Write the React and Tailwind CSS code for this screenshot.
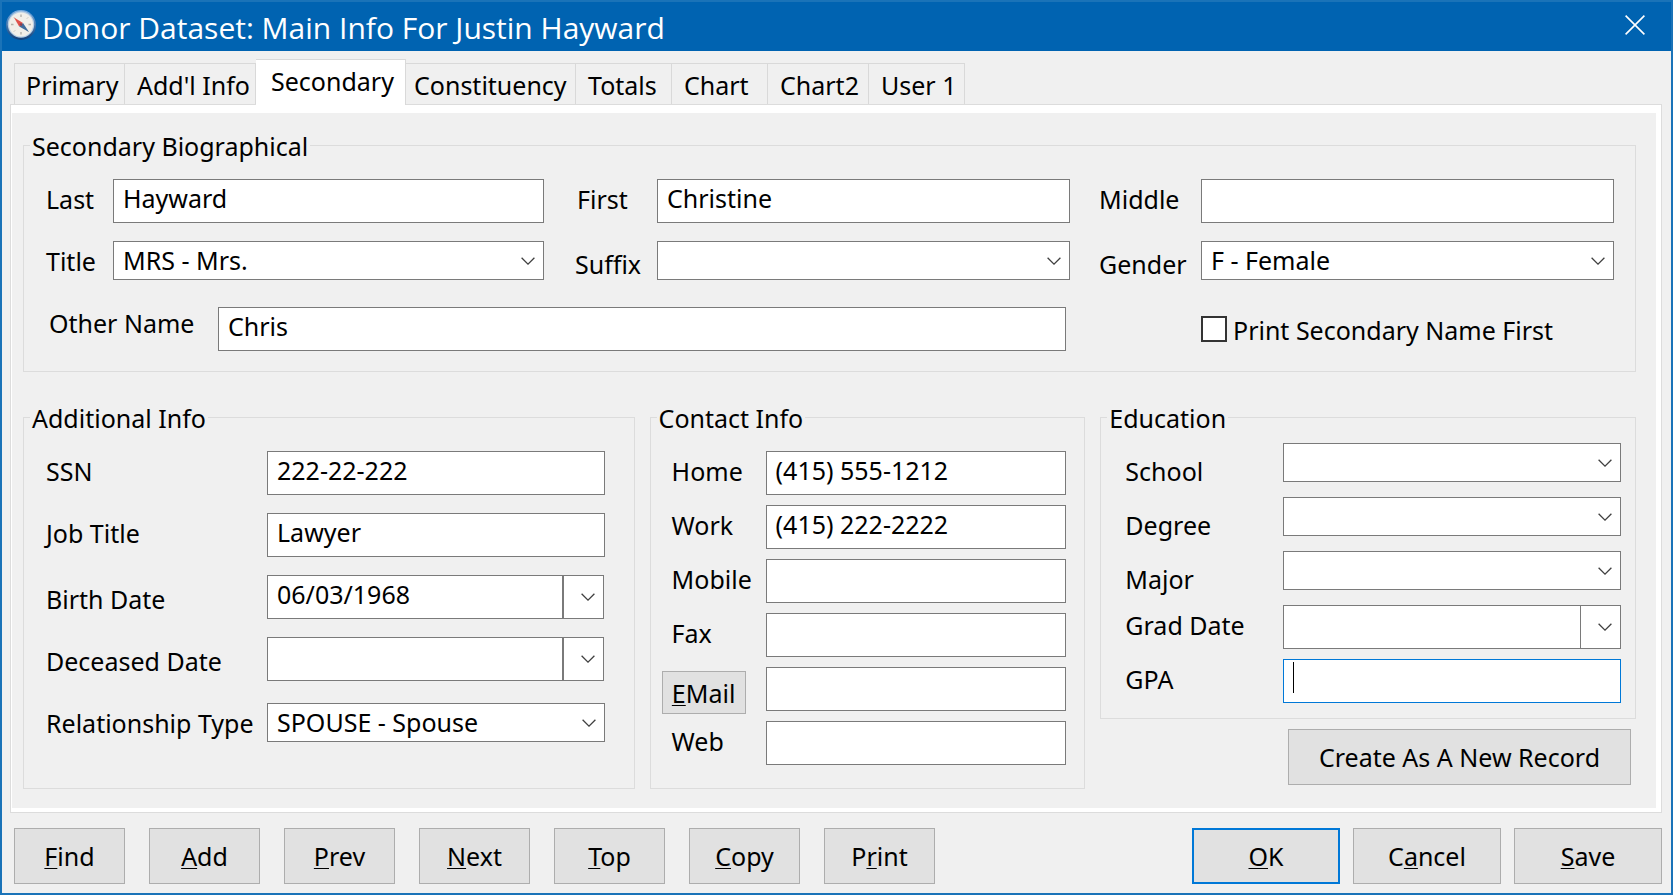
import { useState } from 'react';
import clsx from 'clsx';

const TABS = [
  { label: 'Primary',      size: 'w-[111px] pl-[11px] border-l' },
  { label: "Add'l Info",   size: 'w-[131px] pl-3' },
  { label: 'Secondary',    size: 'w-[150px] pl-[15px]' },
  { label: 'Constituency', size: 'w-[170px] pl-2' },
  { label: 'Totals',       size: 'w-24 pl-3' },
  { label: 'Chart',        size: 'w-24 pl-3' },
  { label: 'Chart2',       size: 'w-[101px] pl-3' },
  { label: 'User 1',       size: 'w-24 pl-3' },
];

// `key` is the index of the underlined accelerator letter
const RECORD_ACTIONS = [
  { label: 'Find',  key: 0 },
  { label: 'Add',   key: 0 },
  { label: 'Prev',  key: 0 },
  { label: 'Next',  key: 0 },
  { label: 'Top',   key: 0 },
  { label: 'Copy',  key: 0 },
  { label: 'Print', key: 1 },
];

const DIALOG_ACTIONS = [
  { label: 'OK',     key: 0, primary: true },
  { label: 'Cancel', key: 1 },
  { label: 'Save',   key: 0 },
];

const PHONES = [
  { id: 'home',   label: 'Home',   value: '(415) 555-1212' },
  { id: 'work',   label: 'Work',   value: '(415) 222-2222' },
  { id: 'mobile', label: 'Mobile', value: '' },
  { id: 'fax',    label: 'Fax',    value: '' },
];

function CompassIcon() {
  return (
    <svg viewBox="0 0 32 32" className="w-8 h-8 shrink-0" aria-hidden="true">
      <defs>
        <linearGradient id="rim" x1="0" y1="0" x2="0" y2="1">
          <stop offset="0" stopColor="#7db0e2" />
          <stop offset="1" stopColor="#123f78" />
        </linearGradient>
      </defs>
      <circle cx="17" cy="16" r="15" fill="url(#rim)" />
      <circle cx="17" cy="15.5" r="13.2" fill="#b9cfe4" />
      <circle cx="17" cy="15.5" r="12" fill="#f1efe9" />
      <g stroke="#b4b2aa" strokeWidth="1.4">
        <path d="M17 5.5v2.5M17 23v2.5M7 15.5h2.5M24.5 15.5H27" />
        <path d="M10 8.5l1 1M24 8.5l-1 1M10 22.5l1-1M24 22.5l-1-1" strokeWidth="1" />
      </g>
      <path d="M10 8.5l9 5.4-3.8 3.6z" fill="#e0524b" />
      <path d="M25 23l-9.8-5.5 3.8-3.6z" fill="#3f6c9c" />
      <circle cx="17" cy="15.6" r="1.3" fill="#8f3f4c" />
    </svg>
  );
}

function Chevron() {
  return (
    <svg viewBox="0 0 14 8" className="w-[14px] h-2" fill="none" stroke="#404040" strokeWidth="1.3" aria-hidden="true">
      <path d="M.6.7L7 7.1 13.4.7" />
    </svg>
  );
}

function Accel({ label, index }) {
  return (
    <>
      {label.slice(0, index)}
      <u className="decoration-1 underline-offset-2">{label[index]}</u>
      {label.slice(index + 1)}
    </>
  );
}

function Group({ title, children }) {
  return (
    <fieldset className="min-w-0 border border-[#dcdcdc]">
      <legend className="ml-[6px] px-[2px] h-8 leading-[34px]">{title}</legend>
      {children}
    </fieldset>
  );
}

function Label({ htmlFor, className = 'pt-1', children }) {
  return (
    <label htmlFor={htmlFor} className={clsx('self-start leading-8 whitespace-nowrap', className)}>
      {children}
    </label>
  );
}

function TextBox({ id, value = '', className, ...rest }) {
  return (
    <input
      id={id}
      type="text"
      defaultValue={value}
      className={clsx('w-full min-w-0 h-11 border border-[#7a7a7a] bg-white px-[9px] pb-[6px] outline-none', className)}
      {...rest}
    />
  );
}

function Select({ id, value = '', className }) {
  return (
    <div className={clsx('relative min-w-0', className)}>
      <select
        id={id}
        defaultValue={value}
        className="block w-full h-[39px] appearance-none border border-[#7a7a7a] bg-white pl-[9px] pr-9 pb-px leading-8 outline-none"
      >
        <option value={value}>{value}</option>
      </select>
      <span className="absolute right-[9px] top-4 pointer-events-none"><Chevron /></span>
    </div>
  );
}

function DateBox({ id, name, value = '', double }) {
  return (
    <div className={clsx('flex h-11 min-w-0', double && 'mr-px')}>
      <TextBox id={id} value={value} className={clsx('flex-1', !double && 'border-r-0')} />
      <button
        type="button"
        aria-label={`Pick ${name}`}
        className="w-[41px] shrink-0 border border-[#7a7a7a] bg-white flex items-center justify-end pr-2"
      >
        <Chevron />
      </button>
    </div>
  );
}

function PushButton({ primary, className, children }) {
  return (
    <button
      type="button"
      className={clsx(
        'bg-[#e1e1e1] text-center pt-[2px]',
        primary ? 'border-2 border-[#0078d7]' : 'border border-[#adadad]',
        className,
      )}
    >
      {children}
    </button>
  );
}

function SecondaryBio() {
  return (
    <Group title="Secondary Biographical">
      <div className="grid grid-cols-[67px_431fr_113px_413fr_131px_413fr] pl-[22px] pr-[21px] pt-[18px] pb-5">
        <Label htmlFor="last">Last</Label>
        <TextBox id="last" value="Hayward" />
        <Label htmlFor="first" className="pl-[33px] pt-1">First</Label>
        <TextBox id="first" value="Christine" />
        <Label htmlFor="middle" className="pl-[29px] pt-1">Middle</Label>
        <TextBox id="middle" />

        <Label htmlFor="title" className="pt-[22px]">Title</Label>
        <Select id="title" value="MRS - Mrs." className="mt-[18px]" />
        <Label htmlFor="suffix" className="pl-[31px] pt-[25px]">Suffix</Label>
        <Select id="suffix" className="mt-[18px]" />
        <Label htmlFor="gender" className="pl-[29px] pt-[25px]">Gender</Label>
        <Select id="gender" value="F - Female" className="mt-[18px]" />

        <div className="col-span-4 mt-[27px] mr-1 pl-[3px] flex">
          <Label htmlFor="other" className="w-[169px] shrink-0">Other Name</Label>
          <TextBox id="other" value="Chris" className="flex-1" />
        </div>
        <div className="col-start-6 mt-[27px] flex items-center gap-[6px]">
          <input
            id="print-first"
            type="checkbox"
            className="appearance-none w-[26px] h-[26px] shrink-0 border-2 border-[#333] bg-white checked:bg-[#333]"
          />
          <Label htmlFor="print-first" className="pt-[7px]">Print Secondary Name First</Label>
        </div>
      </div>
    </Group>
  );
}

function AdditionalInfo() {
  return (
    <Group title="Additional Info">
      <div className="grid grid-cols-[221px_1fr] auto-rows-[44px] gap-y-[18px] pl-[22px] pr-[29px] pt-[18px] pb-[45px]">
        <Label htmlFor="ssn">SSN</Label>
        <TextBox id="ssn" value="222-22-222" />
        <Label htmlFor="job">Job Title</Label>
        <TextBox id="job" value="Lawyer" />
        <Label htmlFor="birth" className="pt-2">Birth Date</Label>
        <DateBox id="birth" name="birth date" value="06/03/1968" double />
        <Label htmlFor="deceased" className="pt-2">Deceased Date</Label>
        <DateBox id="deceased" name="deceased date" double />
        <Label htmlFor="relationship" className="pt-2">Relationship Type</Label>
        <Select id="relationship" value="SPOUSE - Spouse" className="mt-1" />
      </div>
    </Group>
  );
}

function ContactInfo() {
  return (
    <Group title="Contact Info">
      <div className="grid grid-cols-[104px_1fr] auto-rows-[44px] gap-y-[10px] pl-[11px] pr-[18px] pt-[18px]">
        {PHONES.map(p => (
          <div key={p.id} className="contents">
            <Label htmlFor={p.id} className="pl-[10px] pt-1">{p.label}</Label>
            <TextBox id={p.id} value={p.value} />
          </div>
        ))}
        <PushButton className="w-[84px] h-[43px] mt-1"><Accel label="EMail" index={0} /></PushButton>
        <TextBox id="email" aria-label="EMail" />
        <Label htmlFor="web" className="pl-[10px] pt-1">Web</Label>
        <TextBox id="web" />
      </div>
    </Group>
  );
}

function Education() {
  return (
    <Group title="Education">
      <div className="grid grid-cols-[158px_1fr] auto-rows-[44px] gap-y-[10px] pl-6 pr-[14px] pt-[10px] pb-[15px]">
        <Label htmlFor="school" className="pt-3">School</Label>
        <Select id="school" />
        <Label htmlFor="degree" className="pt-3">Degree</Label>
        <Select id="degree" />
        <Label htmlFor="major" className="pt-3">Major</Label>
        <Select id="major" />
        <Label htmlFor="grad">Grad Date</Label>
        <DateBox id="grad" name="grad date" />
        <Label htmlFor="gpa">GPA</Label>
        <div className="relative">
          <TextBox id="gpa" className="border-[#0078d7] caret-transparent" />
          <span className="absolute left-[10px] top-[3px] w-px h-[31px] bg-black pointer-events-none" />
        </div>
      </div>
    </Group>
  );
}

export default function App() {
  const [tab, setTab] = useState('Secondary');

  return (
    <div className="min-h-screen flex flex-col border-2 border-[#1a73b8] bg-[#f0f0f0] text-black text-[25px] font-['Noto_Sans',sans-serif]">
      {/* Title bar */}
      <header className="h-[49px] shrink-0 bg-[#0063b1] text-white flex items-center pl-[2px] pr-6 pb-1">
        <CompassIcon />
        <h1 className="flex-1 pl-[6px] pt-[6px] text-[30px] leading-10 whitespace-nowrap font-['Open_Sans',sans-serif]">
          Donor Dataset: Main Info For Justin Hayward
        </h1>
        <button type="button" aria-label="Close" className="p-[2px]">
          <svg viewBox="0 0 20 20" className="w-5 h-5" stroke="#fff" strokeWidth="1.6">
            <path d="M.6.6l18.8 18.8M19.4.6L.6 19.4" />
          </svg>
        </button>
      </header>

      <main className="flex-1 flex flex-col pt-2 pl-2 pr-[9px]">
        {/* Tabs */}
        <div role="tablist" className="flex items-end h-[45px] pl-1">
          {TABS.map(t => (
            <button
              key={t.label}
              type="button"
              role="tab"
              aria-selected={tab === t.label}
              onClick={() => setTab(t.label)}
              className={clsx(
                'shrink-0 border-t border-r border-[#d9d9d9] text-left leading-8 whitespace-nowrap',
                tab === t.label ? 'relative h-[46px] -mb-px bg-white pb-1' : 'h-[41px] pt-[2px]',
                t.size,
              )}
            >
              {t.label}
            </button>
          ))}
        </div>

        {/* Tab page */}
        <div role="tabpanel" className="border border-[#dcdcdc] bg-white pt-2 pr-[5px] pb-1 pl-px">
          <div className="bg-[#f0f0f0] pt-4 pr-5 pb-[19px] pl-[11px]">
            <SecondaryBio />
            <div className="mt-[29px] grid grid-cols-[612fr_436fr_536fr] gap-x-[15px]">
              <AdditionalInfo />
              <ContactInfo />
              <div className="flex flex-col min-w-0">
                <Education />
                <PushButton className="self-end mt-[10px] mr-[5px] w-[343px] h-14">Create As A New Record</PushButton>
              </div>
            </div>
          </div>
        </div>

        {/* Command buttons */}
        <footer className="flex justify-between pl-1 pt-[15px] pb-[9px]">
          <div className="flex gap-6">
            {RECORD_ACTIONS.map(a => (
              <PushButton key={a.label} className="w-[111px] h-14"><Accel label={a.label} index={a.key} /></PushButton>
            ))}
          </div>
          <div className="flex gap-[13px]">
            {DIALOG_ACTIONS.map(a => (
              <PushButton key={a.label} primary={a.primary} className="w-[148px] h-14">
                <Accel label={a.label} index={a.key} />
              </PushButton>
            ))}
          </div>
        </footer>
      </main>
    </div>
  );
}
